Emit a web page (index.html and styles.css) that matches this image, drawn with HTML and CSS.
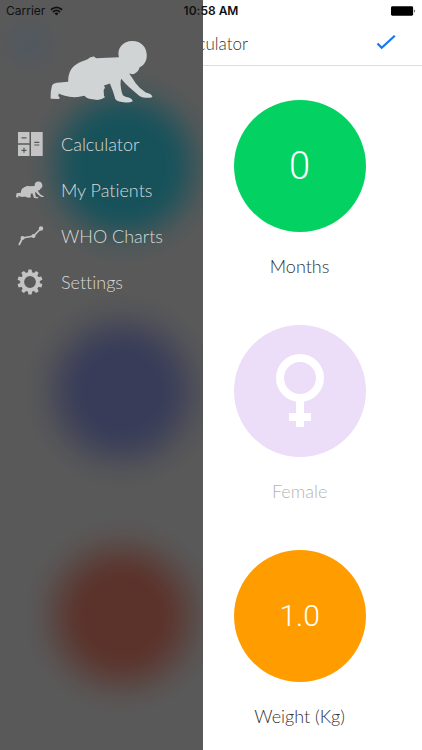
FILE: index.html
```html
<!DOCTYPE html>
<html lang="en">
  <head>
    <meta charset="UTF-8" />
    <meta name="viewport" content="width=device-width, initial-scale=1" />
    <title>Calculator</title>
    <link rel="stylesheet" href="styles.css">
  </head>
  <body>
    <div id="app">
      <div class="status">
        <div class="carrier">
          Carrier
          <svg class="wifi" viewBox="0 0 14 10" fill="none" stroke="#111" stroke-width="2">
            <path d="M1 3.7Q7-1.5 13 3.7M3.2 6Q7 2.7 10.8 6" />
            <path d="M7 9.8L4.8 7.5Q7 5.8 9.2 7.5z" fill="#111" stroke="none" />
          </svg>
        </div>
        <strong>10:58 AM</strong>
        <svg class="battery" viewBox="0 0 26 10">
          <rect x="0" y="0" width="23" height="10" rx="1.5" />
          <path d="M24 3.2q1.6 1.8 0 3.6z" />
        </svg>
      </div>
      <header class="bar">
        <h1>Calculator</h1>
        <button class="btn-done" aria-label="Done">
          <svg viewBox="0 0 20 16" fill="none" stroke="#1478f0" stroke-width="2.2">
            <path d="M1.5 8.5L5.7 12.8L18.8 0.8" />
          </svg>
        </button>
      </header>
      <main class="tiles">
        <button class="tile"><span class="circle green big">0</span>Months</button>
        <button class="tile off">
          <span class="circle purple">
            <svg class="female" viewBox="0 0 48 74" fill="none" stroke="#fff" stroke-width="8">
              <circle cx="24" cy="24" r="20" />
              <path d="M24 46V73M13 63H35" />
            </svg>
          </span>
          Female
        </button>
        <button class="tile"><span class="circle orange">1.0</span>Weight (Kg)</button>
      </main>

      <aside class="drawer">
        <svg class="logo" viewBox="147 122 309 187">
          <path id="baby" d="M354 171C347 143 367 122 394 122C422 122 438 141 438 166C438 184 430 195 416 202C414 212 405 221 395 222L385 220Q396 235 404 249Q417 267 435 277Q452 280 455 290Q454 294 440 293Q425 295 416 288L386 262Q369 247 361 236Q358 243 359 254Q361 275 366 286Q372 291 386 293Q395 296 396 304Q387 309 368 307Q349 305 343 297Q338 276 327 250L309 256L312 263L308 270L309 287L312 292Q303 299 290 300L264 296Q254 293 250 287L230 291Q209 293 191 287Q180 284 173 280L171 288L176 293L173 297L148 296Q147 276 152 257Q155 250 167 248L201 245C201 218 210 203 225 193C236 185 248 183 258 178Q268 169 279 169L285 174Z" />
        </svg>
        <nav>
          <a href="#">
            <svg viewBox="0 0 28 26">
              <path d="M2 1H13.500V12.300H2zM2 13.700H13.500V25H2zM15 1H26.700V25H15z" />
              <path d="M5.500 6.800H10.500M5.500 19.300H10.500M8 16.800V21.800M18.300 11.400H23.300M18.300 14H23.300" fill="none" stroke="#535a5b" stroke-width="1.200" />
            </svg>
            Calculator
          </a>
          <a href="#">
            <svg viewBox="147 122 309 187"><use href="#baby" /></svg>
            My Patients
          </a>
          <a href="#">
            <svg viewBox="0 0 28 26">
              <path d="M3 22L6.500 15L17.500 13L25 5.500" fill="none" stroke="#c4c4c4" stroke-width="1.700" />
              <circle cx="6.500" cy="15" r="2" />
              <circle cx="17.500" cy="13" r="2" />
              <circle cx="25" cy="5.500" r="2.200" />
            </svg>
            WHO Charts
          </a>
          <a href="#">
            <svg viewBox="-14 -13 28 26">
              <circle r="7.900" fill="none" stroke="#c4c4c4" stroke-width="4" />
              <path id="tooth" d="M-2.200-9L-1.600-12.500H1.600L2.200-9zM-2.200 9L-1.600 12.500H1.600L2.200 9z" />
              <use href="#tooth" transform="rotate(36)" />
              <use href="#tooth" transform="rotate(72)" />
              <use href="#tooth" transform="rotate(108)" />
              <use href="#tooth" transform="rotate(144)" />
            </svg>
            Settings
          </a>
        </nav>
      </aside>
    </div>
  </body>
</html>
```
FILE: styles.css
```css
* {
  box-sizing: border-box;
}
body {
  margin: 0;
  background: #fff;
  font-family: Lato, "Liberation Sans", sans-serif;
  font-variant-ligatures: none;
  color: #333;
}
button {
  padding: 0;
  border: 0;
  background: transparent;
  font: inherit;
  font-variant-ligatures: none;
  color: inherit;
  cursor: pointer;
}
#app {
  position: relative;
  min-height: 100vh;
  overflow: hidden;
}
.status {
  position: relative;
  z-index: 2;
  display: grid;
  grid-template-columns: 1fr auto 1fr;
  align-items: center;
  height: 21px;
  padding: 0 6px;
  font-family: Inter, "Liberation Sans", sans-serif;
  font-size: 12px;
  color: #111;
}
.status strong {
  font-weight: 600;
}
.carrier {
  display: flex;
  align-items: center;
  gap: 5px;
}
.wifi {
  width: 13px;
  height: 10px;
}
.battery {
  justify-self: end;
  width: 25px;
  height: 10px;
}
.bar {
  display: grid;
  grid-template-columns: 1fr auto 1fr;
  align-items: center;
  height: 45px;
  padding: 0 26px;
  border-bottom: 1px solid #ddd;
}
.bar h1 {
  grid-column: 2;
  margin: 0;
  font-size: 17px;
  font-weight: 300;
}
.btn-done {
  justify-self: end;
}
.btn-done svg {
  display: block;
  width: 20px;
  height: 16px;
}
.tiles {
  display: flex;
  flex-direction: column;
  align-items: center;
  gap: 46px;
  margin-left: 42%;
  padding: 34px 0 20px;
}
.tile {
  display: flex;
  flex-direction: column;
  align-items: center;
  gap: 22px;
  height: 179px;
  font-size: 18px;
  font-weight: 300;
  line-height: 24px;
}
.tile.off {
  color: #b4b4b4;
}
.circle {
  display: flex;
  flex: none;
  justify-content: center;
  align-items: center;
  width: 132px;
  height: 132px;
  border-radius: 50%;
  font-family: Roboto, "Liberation Sans", sans-serif;
  font-size: 30px;
  color: #fff;
}
.big {
  font-size: 38px;
}
.green {
  background: #03d162;
}
.purple {
  background: #ecddf8;
}
.orange {
  background: #ff9d00;
}
.female {
  width: 48px;
  height: 74px;
}
.drawer {
  position: absolute;
  left: 0;
  top: 0;
  bottom: 0;
  width: 48%;
  padding-top: 41px;
  background-color: #595959;
  background-image:
    radial-gradient(circle at 30px 44px, rgba(78, 88, 96, 0.8), rgba(78, 88, 96, 0) 36px),
    radial-gradient(circle at 124px 166px, #17525b 42px, rgba(23, 82, 91, 0.85) 54px, rgba(23, 82, 91, 0.5) 68px, rgba(23, 82, 91, 0.15) 82px, rgba(23, 82, 91, 0) 98px),
    radial-gradient(circle at 122px 391px, #383c58 38px, rgba(56, 60, 88, 0.85) 50px, rgba(56, 60, 88, 0.5) 66px, rgba(56, 60, 88, 0.15) 82px, rgba(56, 60, 88, 0) 98px),
    radial-gradient(circle at 122px 616px, #5b332b 38px, rgba(91, 51, 43, 0.85) 50px, rgba(91, 51, 43, 0.5) 66px, rgba(91, 51, 43, 0.15) 82px, rgba(91, 51, 43, 0) 98px);
}
.drawer svg {
  fill: #c4c4c4;
}
.drawer .logo {
  display: block;
  width: 103px;
  height: 62px;
  margin: 0 auto 18px;
  fill: #d0d4d4;
}
nav a {
  display: flex;
  align-items: center;
  gap: 17px;
  height: 46px;
  padding-left: 16px;
  font-size: 18px;
  font-weight: 300;
  color: #d8d8d8;
  text-decoration: none;
}
nav svg {
  width: 28px;
  height: 26px;
}
```
